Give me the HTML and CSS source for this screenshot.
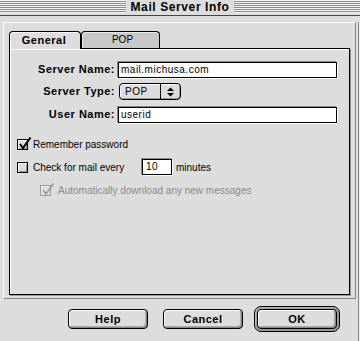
FILE: index.html
```html
<!DOCTYPE html>
<html lang="en">
  <head>
    <meta charset="UTF-8" />
    <title>Mail Server Info</title>
    <link rel="stylesheet" href="styles.css">
  </head>
  <body>
    <div class="titlebar">
      <span class="title">Mail Server Info</span>
    </div>
    <div class="dialog">
      <div class="frame">
        <div class="tabs">
          <div class="tab active">General</div>
          <div class="tab">POP</div>
        </div>
        <div class="panel">
          <div class="fields">
            <div class="label">Server Name:</div>
            <div class="field">mail.michusa.com</div>
            <div class="label">Server Type:</div>
            <div class="popup">
              <span class="popup-value">POP</span>
              <span class="popup-arrows">
                <svg width="19" height="15" viewBox="0 0 19 15">
                  <polygon points="6,7 13,7 9.5,3.5" fill="#000"/>
                  <polygon points="6,9 13,9 9.5,12.5" fill="#000"/>
                </svg>
              </span>
            </div>
            <div class="label">User Name:</div>
            <div class="field">userid</div>
          </div>

          <div class="options">
            <div class="option">
              <span class="checkbox">
                <svg class="check" width="14" height="14" viewBox="0 0 14 14">
                  <path d="M2 7 L5 11 L12.5 0.5" fill="none" stroke="#000" stroke-width="2"/>
                </svg>
              </span>
              Remember password
            </div>
            <div class="option">
              <span class="checkbox"></span>
              <span class="option-text">Check for mail every</span>
              <span class="field small">10</span>
              <span class="after">minutes</span>
            </div>
            <div class="option sub disabled">
              <span class="checkbox">
                <svg class="check" width="14" height="14" viewBox="0 0 14 14">
                  <path d="M2 7 L5 11 L12.5 0.5" fill="none" stroke="#999" stroke-width="1.5"/>
                </svg>
              </span>
              Automatically download any new messages
            </div>
          </div>
        </div>
      </div>

      <div class="buttons">
        <div class="button help">Help</div>
        <div class="button cancel">Cancel</div>
        <div class="default">
          <div class="button">OK</div>
        </div>
      </div>
    </div>
  </body>
</html>
```

FILE: styles.css
```css
* {
  box-sizing: border-box;
}
body {
  margin: 0;
  width: 360px;
  height: 341px;
  overflow: hidden;
  background-color: #ddd;
  font-family: "Liberation Sans", Arial, sans-serif;
  font-size: 10px;
  color: #000;
}
.titlebar {
  height: 16px;
  border-bottom: 1px solid #444;
  background: repeating-linear-gradient(to bottom, #f4f4f4 0 1px, #8a8a8a 1px 2px) 0 0 / 100% 13px no-repeat, #ddd;
  display: flex;
  justify-content: center;
}
.title {
  background-color: #ddd;
  padding: 0 5px;
  height: 14px;
  line-height: 14px;
  font-weight: bold;
  font-size: 12px;
  letter-spacing: 0.6px;
}
.dialog {
  height: 325px;
  border-bottom: 3px solid #000;
  box-shadow: inset -1px 0 #eee, inset -2px 0 #888, inset 0 -1px #888;
}
.frame {
  margin: 6px 0 0 3px;
  width: 353px;
  height: 277px;
  border-top: 1px solid #fff;
  border-left: 1px solid #fff;
  border-right: 1px solid #888;
  border-bottom: 1px solid #888;
  padding: 8px 0 0 5px;
}
.tabs {
  display: flex;
  align-items: flex-start;
  height: 17px;
}
.tab {
  height: 17px;
  border: 1px solid #000;
  border-bottom: none;
  border-radius: 4px 4px 0 0;
  background-color: #c8c8c8;
  box-shadow: inset 1px 1px #e8e8e8;
  text-align: center;
  line-height: 15px;
  font-size: 10px;
  width: 79px;
  padding-left: 4px;
}
.tab.active {
  position: relative;
  z-index: 1;
  width: 72px;
  height: 18px;
  background-color: #ddd;
  box-shadow: inset 1px 1px #fff;
  font-weight: bold;
  font-size: 11px;
  letter-spacing: 0.5px;
  line-height: 17px;
  padding-left: 0;
  padding-right: 2px;
}
.panel {
  width: 341px;
  height: 247px;
  border: 1px solid #000;
  background-color: #ddd;
  box-shadow: inset 1px 1px #fff, 1px 1px 0 #999;
}
.fields {
  display: grid;
  grid-template-columns: 105px 219px;
  grid-template-rows: 17px 18px 17px;
  column-gap: 3px;
  row-gap: 5px;
  margin-top: 12px;
}
.label {
  text-align: right;
  font-weight: bold;
  font-size: 11px;
  letter-spacing: 0.5px;
  line-height: 17px;
}
.field {
  margin-top: 1px;
  height: 16px;
  border: 1px solid #000;
  background-color: #fff;
  box-shadow: -1px -1px 0 #888, 1px 1px 0 #fff;
  padding-left: 2px;
  line-height: 14px;
  letter-spacing: 0.5px;
  white-space: nowrap;
}
.popup {
  margin-left: 1px;
  width: 62px;
  height: 17px;
  border: 1px solid #000;
  border-radius: 4px;
  box-shadow: inset 1px 1px #fff, inset -1px -1px #999;
  display: flex;
}
.popup-value {
  width: 40px;
  padding-left: 5px;
  line-height: 15px;
  letter-spacing: 0.5px;
}
.popup-arrows {
  border-left: 1px solid #000;
  display: flex;
}
.options {
  margin-top: 12px;
  display: flex;
  flex-direction: column;
  gap: 5px;
}
.option {
  display: flex;
  align-items: center;
  height: 18px;
  padding-left: 7px;
}
.option.sub {
  padding-left: 30px;
}
.option.disabled {
  color: #8a8a8a;
}
.checkbox {
  position: relative;
  width: 11px;
  height: 11px;
  border: 1px solid #000;
  background-color: #ddd;
  box-shadow: inset 1px 1px #fff, inset -1px -1px #999;
  margin-right: 5px;
}
.disabled .checkbox {
  border-color: #999;
  box-shadow: inset 1px 1px #eee;
  margin-right: 7px;
}
.check {
  position: absolute;
  left: 0;
  top: -3px;
  overflow: visible;
}
.option-text {
  width: 109px;
}
.field.small {
  margin-top: 0;
  width: 30px;
  padding-left: 3px;
}
.after {
  margin-left: 4px;
}
.buttons {
  display: flex;
  justify-content: flex-end;
  align-items: center;
  height: 26px;
  margin-top: 7px;
  padding-right: 20px;
}
.button {
  width: 80px;
  height: 20px;
  border: 1px solid #000;
  border-radius: 4px;
  background-color: #ddd;
  box-shadow: inset 1px 1px #fff, inset -1px -1px #888, inset -2px -2px #aaa;
  text-align: center;
  line-height: 18px;
  font-weight: bold;
  font-size: 11px;
  letter-spacing: 0.5px;
}
.help {
  margin-right: 15px;
}
.cancel {
  margin-right: 11px;
}
.default {
  padding: 2px;
  border: 1px solid #000;
  border-radius: 7px;
  background-color: #999;
  box-shadow: inset 1px 1px #bbb;
}
```
